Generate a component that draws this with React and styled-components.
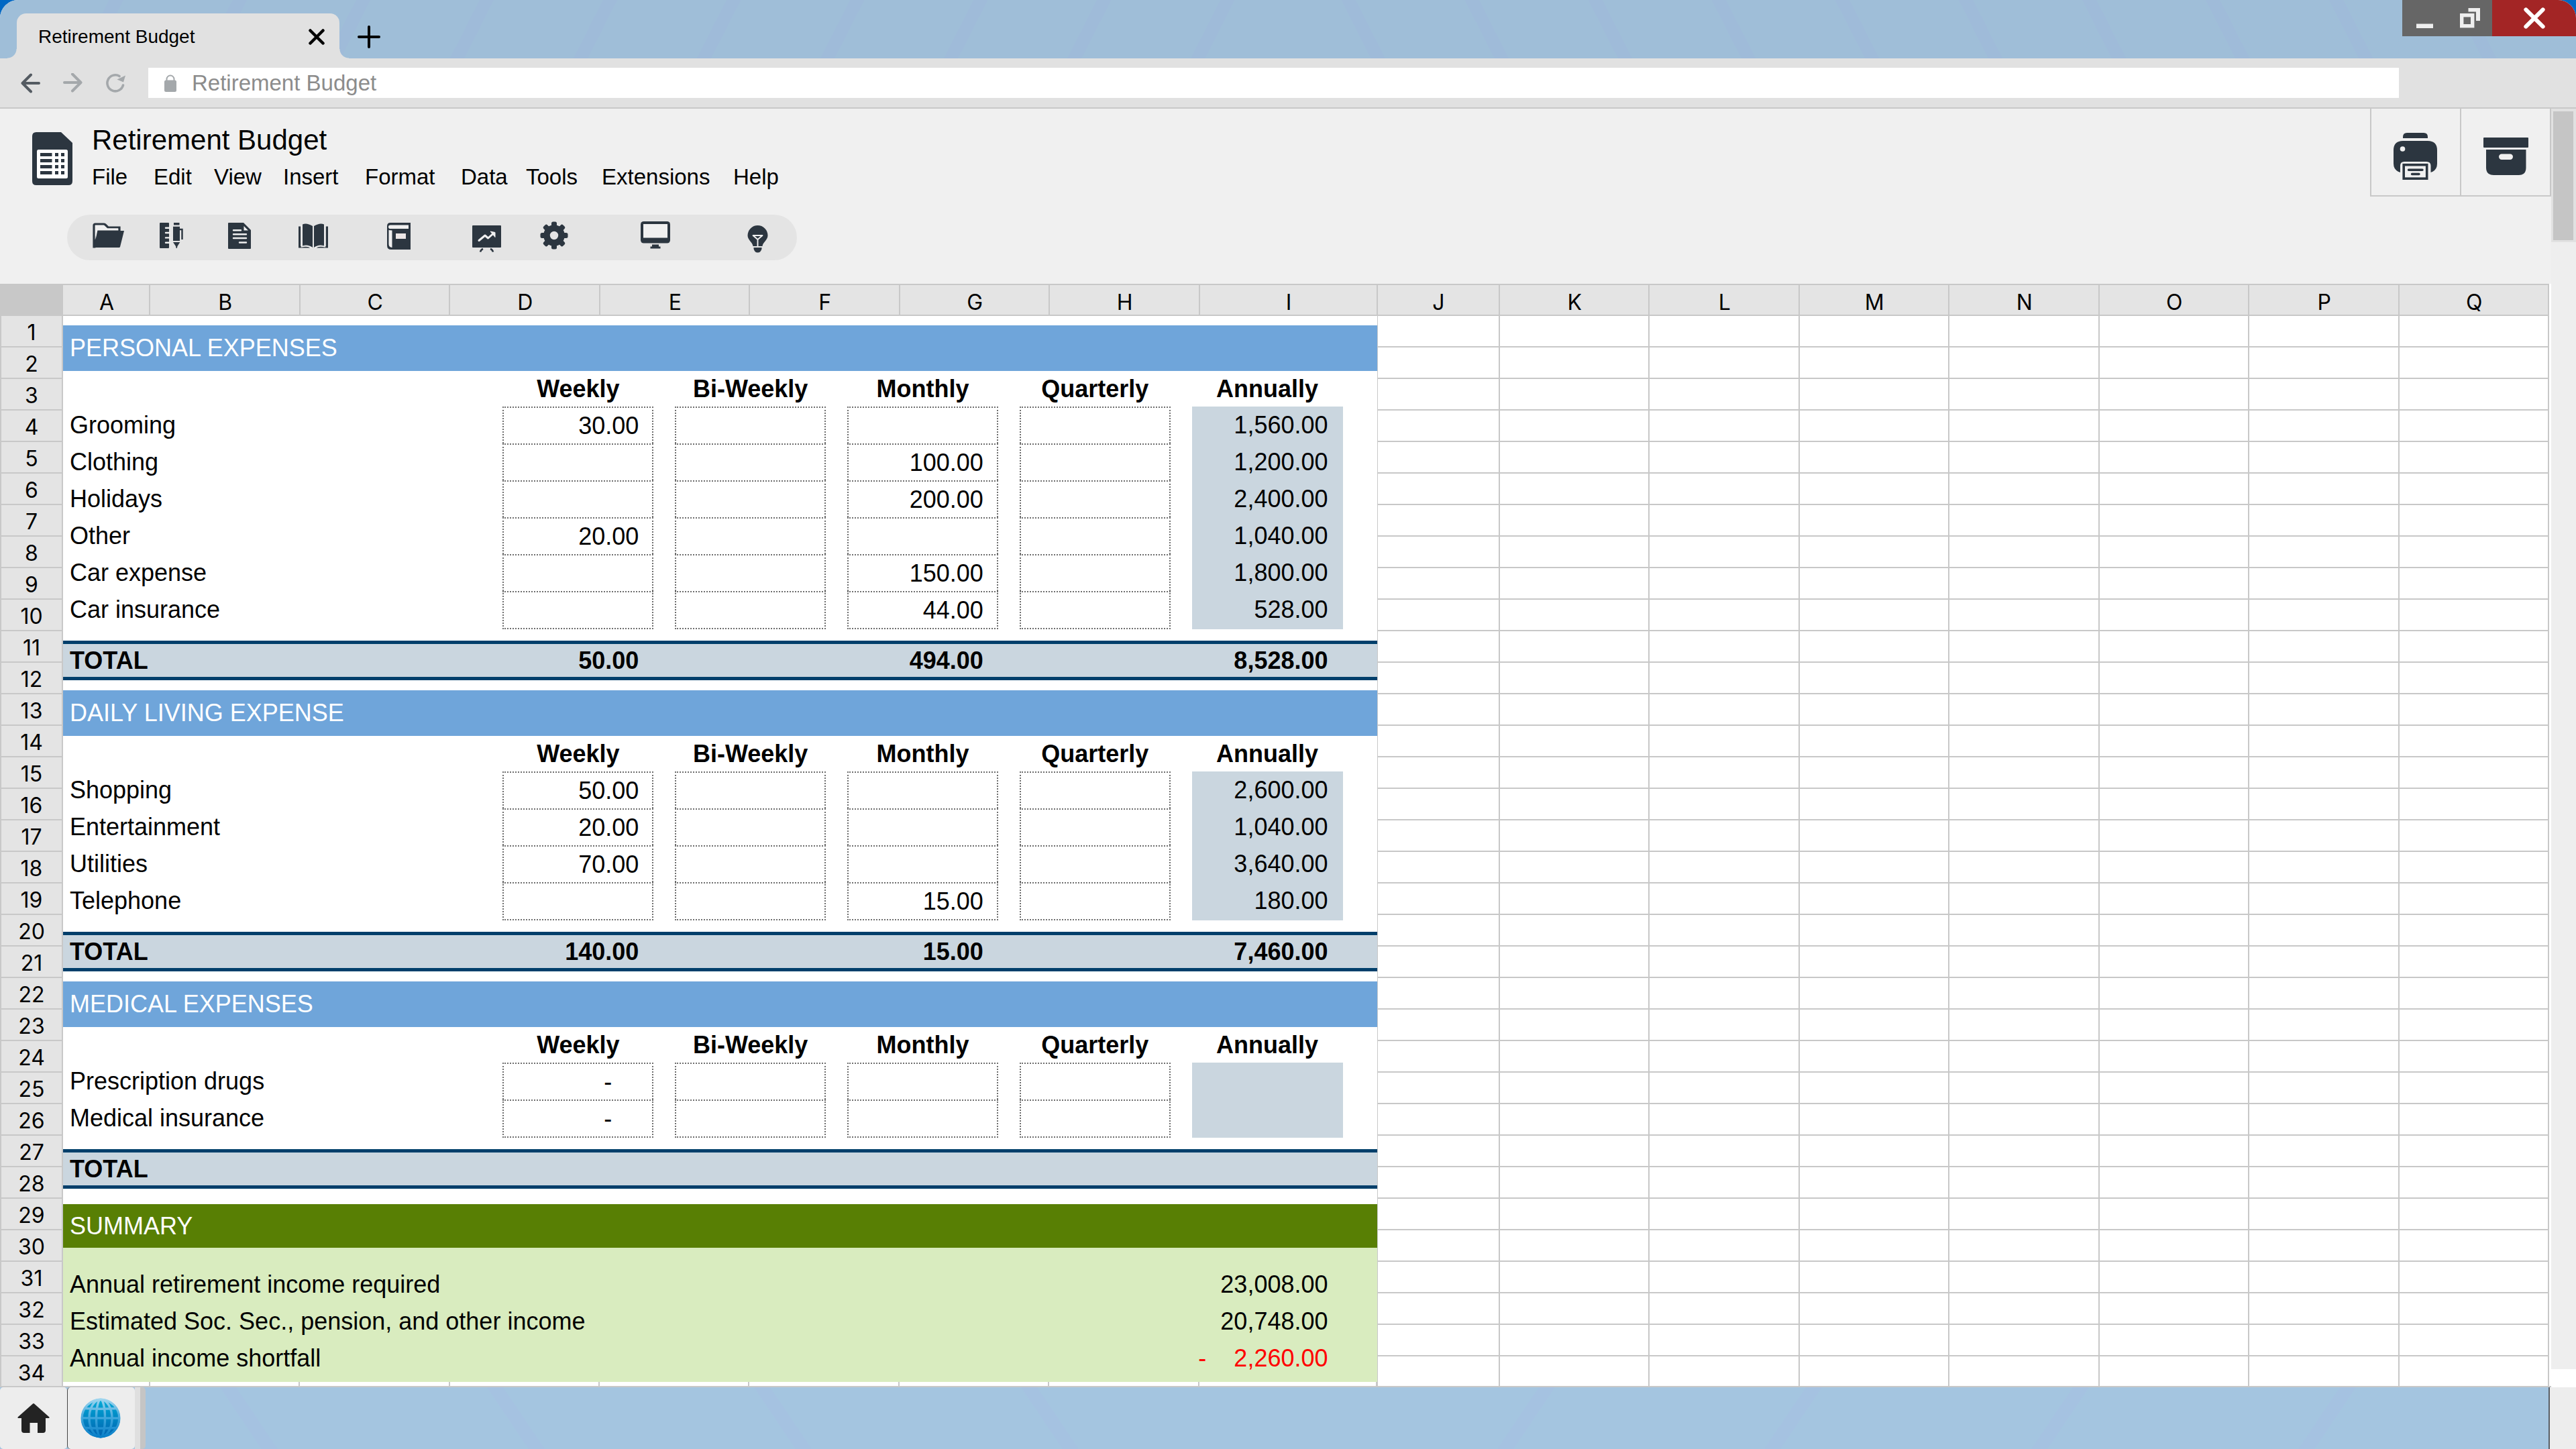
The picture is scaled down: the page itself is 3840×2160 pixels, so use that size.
import React from 'react';
import styled, { createGlobalStyle, css } from 'styled-components';

const INK = '#2c3640';
const PAPER = '#f0f0f0';
const LINE = '#c8c8c8';
const HEAD_FONT = `'Inter', 'Liberation Sans', sans-serif`;
const BASE_FONT = `'Liberation Sans', Arial, sans-serif`;
const SHEET_COLUMNS = '94px 260fr repeat(7, 447fr) 530fr 364fr repeat(7, 447fr)';

const GlobalStyle = createGlobalStyle`
  * {
    box-sizing: border-box;
  }

  body {
    margin: 0;
    background: #0068c4;
    font-family: ${BASE_FONT};
    color: #000;
  }

  button {
    margin: 0;
    padding: 0;
    border: 0;
    background: none;
    font: inherit;
    color: inherit;
    cursor: pointer;
  }

  svg {
    display: block;
  }
`;

const Window = styled.div`
  display: flex;
  flex-direction: column;
  height: 100vh;
  overflow: hidden;
  border-radius: 27px 27px 0 0;
  background: ${PAPER};
`;

/* ---------- browser chrome ---------- */

const TitleBar = styled.header`
  display: flex;
  align-items: flex-end;
  height: 87px;
  flex: none;
  padding-left: 25px;
  background:
    repeating-linear-gradient(117deg, transparent 0 145px, #9fbbd9 145px 164px) left / 50% 100% no-repeat,
    repeating-linear-gradient(243deg, transparent 0 145px, #9fbbd9 145px 164px) right / 50% 100% no-repeat,
    #9fbed8;
`;

const Tab = styled.div`
  position: relative;
  display: flex;
  align-items: center;
  justify-content: space-between;
  width: 481px;
  height: 67px;
  padding: 2px 22px 0 32px;
  border-radius: 14px 14px 0 0;
  background: #e1e1e1;
  font-size: 28px;

  &::before,
  &::after {
    content: '';
    position: absolute;
    bottom: 0;
    width: 14px;
    height: 14px;
  }

  &::before {
    right: 100%;
    background: radial-gradient(circle at 0 0, transparent 13px, #e1e1e1 14px);
  }

  &::after {
    left: 100%;
    background: radial-gradient(circle at 100% 0, transparent 13px, #e1e1e1 14px);
  }
`;

const NewTab = styled.button`
  margin: 0 auto 15px 27px;
`;

const Controls = styled.div`
  display: flex;
  align-self: flex-start;
`;

const ControlButton = styled.button`
  display: grid;
  place-items: center;
  width: ${({ $close }) => ($close ? '125px' : '67px')};
  height: 54px;
  background: ${({ $close }) => ($close ? '#a32525' : '#666')};
`;

const NavBar = styled.div`
  display: flex;
  align-items: center;
  gap: 34px;
  flex: none;
  height: 75px;
  padding: 0 264px 0 31px;
  border-bottom: 2px solid ${LINE};
  background: #e1e1e1;
`;

const AddressBar = styled.label`
  display: flex;
  align-items: center;
  gap: 23px;
  flex: 1;
  height: 45px;
  padding-left: 24px;
  background: #fff;
`;

const AddressInput = styled.input`
  flex: 1;
  padding: 0;
  border: 0;
  outline: none;
  background: none;
  font-family: ${BASE_FONT};
  font-size: 33px;
  color: #8c8c8c;
`;

/* ---------- application ---------- */

const Main = styled.main`
  display: flex;
  flex: 1;
  min-height: 0;
`;

const AppArea = styled.div`
  display: flex;
  flex-direction: column;
  flex: 1;
  min-width: 0;
`;

const AppHeader = styled.div`
  display: flex;
  justify-content: space-between;
  align-items: flex-start;
  flex: none;
`;

const HeaderLeft = styled.div`
  padding: 26px 0 35px 48px;
`;

const Brand = styled.div`
  display: flex;
  align-items: center;
  gap: 29px;
`;

const Title = styled.h1`
  margin: 0 0 14px;
  font-size: 42px;
  font-weight: 400;
  line-height: 42px;
`;

const Menu = styled.nav`
  display: grid;
  grid-template-columns: 92px 90px 103px 122px 143px 97px 113px 196px auto;
  justify-items: start;
`;

const MenuItem = styled.button`
  font-size: 33px;
  line-height: 40px;
`;

const Toolbar = styled.div`
  display: grid;
  grid-template-columns: 100px 102px 105px 132px 127px 101px 150px 159px auto;
  align-items: center;
  justify-items: start;
  width: 1088px;
  height: 68px;
  margin: 36px 0 0 52px;
  padding-left: 38px;
  border-radius: 34px;
  background: #e4e4e4;
`;

const HeaderActions = styled.div`
  display: flex;
  border-left: 2px solid ${LINE};
`;

const ActionButton = styled.button`
  display: grid;
  place-items: center;
  width: 134px;
  height: 131px;
  padding-top: 12px;
  border-right: 2px solid ${LINE};
  border-bottom: 2px solid ${LINE};
`;

const ScrollColumn = styled.div`
  display: flex;
  flex-direction: column;
  width: 37px;
  padding-bottom: 27px;
  background: #fff;
`;

const ThumbHolder = styled.div`
  height: 199px;
  padding: 4px 4px 3px 3px;
  background: #e1e1e1;
`;

const Thumb = styled.div`
  height: 100%;
  background: #c5c5c5;
`;

const Track = styled.div`
  flex: 1;
  background: #eee;
`;

/* ---------- sheet ---------- */

const Sheet = styled.section`
  flex: 1;
  min-height: 0;
  overflow: hidden;
  padding-right: 3px;
  border-bottom: 2px solid ${LINE};
  background: #fff;
`;

const ColumnHeads = styled.div`
  display: grid;
  grid-template-columns: ${SHEET_COLUMNS};
  height: 48px;
  border-top: 2px solid ${LINE};
  border-bottom: 2px solid ${LINE};
  background: #e4e4e4;
`;

const Head = styled.div`
  display: grid;
  place-items: center;
  padding: 8px 0 0 2px;
  border-right: 2px solid ${LINE};
  background: ${({ $corner }) => ($corner ? LINE : '#e4e4e4')};
  font-family: ${HEAD_FONT};
  font-size: 32px;
  line-height: 36px;
`;

const RowHead = styled(Head)`
  grid-column: 1;
  padding: 4px 0 0;
  border-left: 2px solid ${LINE};
  border-bottom: 2px solid ${LINE};
`;

const SheetBody = styled.div`
  display: grid;
  grid-template-columns: ${SHEET_COLUMNS};
  grid-template-rows: repeat(34, 47px);
`;

const Cell = styled.div`
  border-right: 2px solid ${LINE};
  border-bottom: 2px solid ${LINE};
`;

const Report = styled.div`
  grid-column: 2 / 11;
  grid-row: 1 / -1;
  display: flex;
  flex-direction: column;
  padding-top: 14px;
  border-right: 1px solid ${LINE};
  font-size: 36px;
  line-height: 40px;
`;

const Band = styled.h2`
  display: flex;
  align-items: center;
  height: ${({ $summary }) => ($summary ? '65px' : '68px')};
  margin: 0;
  padding-left: 10px;
  background: ${({ $summary }) => ($summary ? '#587f04' : '#6fa5da')};
  color: #fff;
  font-size: 36px;
  font-weight: 400;
`;

const Table = styled.table`
  display: block;
  margin-bottom: ${({ $last }) => ($last ? '23px' : '15px')};

  caption {
    display: block;
  }

  thead,
  tbody,
  tfoot {
    display: block;
  }
`;

const rowLayout = css`
  display: grid;
  grid-template-columns: 614fr repeat(5, 225fr);
  align-items: stretch;
  column-gap: 32px;
  padding: 0 51px 0 10px;
`;

const HeadingRow = styled.tr`
  ${rowLayout}
  height: 53px;
`;

const Heading = styled.th`
  padding: 0;
  font-weight: 700;
  line-height: 53px;
`;

const Row = styled.tr`
  ${rowLayout}
  height: 55px;

  &:last-child td {
    border-bottom-width: 2px;
  }
`;

const RowLabel = styled.th`
  padding: 0;
  text-align: left;
  font-weight: ${({ $bold }) => ($bold ? 700 : 400)};
  line-height: ${({ $bold }) => ($bold ? '49px' : '55px')};
  white-space: nowrap;
`;

const Amount = styled.td`
  padding: 0 ${({ $dash }) => ($dash ? '60px' : '20px')} 0 0;
  border: 2px dotted #6e6e6e;
  border-bottom-width: 0;
  text-align: right;
  line-height: 53px;
`;

const Annual = styled.td`
  padding: 0 22px 0 0;
  background: #cad6df;
  text-align: right;
  line-height: 55px;
`;

const TotalRow = styled.tr`
  ${rowLayout}
  height: 59px;
  margin-top: 19px;
  border-top: 5px solid #003f6b;
  border-bottom: 5px solid #003f6b;
  background: #cad6df;
`;

const Total = styled.td`
  padding: 0 22px 0 0;
  text-align: right;
  font-weight: 700;
  line-height: 49px;
`;

const SummaryList = styled.dl`
  margin: 0;
  padding: 27px 73px 8px 10px;
  background: #d9ecbf;
`;

const SummaryRow = styled.div`
  display: flex;
  justify-content: space-between;
  line-height: 55px;
`;

const SummaryValue = styled.dd`
  display: flex;
  gap: 41px;
  margin: 0;
  color: ${({ $negative }) => ($negative ? '#f00' : '#000')};
`;

const StubRow = styled.div`
  display: grid;
  grid-template-columns: 260fr repeat(7, 447fr) 530fr;
  flex: 1;
`;

const Stub = styled.div`
  border-right: 2px solid ${LINE};
`;

/* ---------- taskbar ---------- */

const TaskBar = styled.footer`
  display: flex;
  flex: none;
  height: 92px;
  background:
    repeating-linear-gradient(236deg, transparent 0 310px, #a5c2e1 310px 330px) left / 50% 100% no-repeat,
    repeating-linear-gradient(124deg, transparent 0 310px, #a5c2e1 310px 330px) right / 50% 100% no-repeat,
    #a4c5e0;
`;

const TaskButton = styled.button`
  display: grid;
  place-items: center;
  width: 100px;
  border-radius: 5px;
  background: #ededed;

  & + & {
    width: 101px;
    border-left: 1px solid #444;
    padding-right: 2px;
  }
`;

const TaskEdge = styled.div`
  width: 16px;
  border-left: 8px solid #dfdfdf;
  border-radius: 0 5px 5px 0;
  background: #c5c5c5;
`;

const TaskEnd = styled.div`
  width: 41px;
  margin-left: auto;
  border-left: 2px solid #5a5f66;
  background: #ededed;
`;

/* ---------- icons ---------- */

const FolderIcon = () => (
  <svg width="48" height="48" viewBox="0 0 48 48">
    <path d="M2 38V6Q2 4 4 4H16.500Q18 4 19 5L23 9H40V15H8L3 38Z" fill={PAPER} stroke={INK} strokeWidth="3.200" />
    <path d="M8 14H47L41 38Q40.700 39 39.500 39H2.500Q1.500 39 1.800 37Z" fill={INK} />
    <path d="M4.500 27V12Q4.500 10.500 6 10.500H38V13H7.500Z" fill={PAPER} />
  </svg>
);

const RulerPenIcon = () => (
  <svg width="36" height="48" viewBox="0 0 36 48">
    <rect y="2" width="14" height="38" rx="1" fill={INK} />
    <path d="M9 9.700H15M9 17H15M9 24.400H15M9 31.800H15" stroke={PAPER} strokeWidth="2.400" strokeLinecap="round" />
    <path d="M21 2H29.500V5.500H21ZM20 7.700H30V29H20ZM20 31H30.300L26.500 37L25.800 40H24.700L24 37Z" fill={INK} />
    <path d="M29 12H33.500V27" fill="none" stroke={INK} strokeWidth="2.400" />
  </svg>
);

const DocIcon = () => (
  <svg width="34" height="48" viewBox="0 0 34 48">
    <path d="M1 2H23L34 13V40Q34 41 33 41H1Q0 41 0 40V3Q0 2 1 2Z" fill={INK} />
    <path d="M23.500 7V13.500H30Z" fill={PAPER} />
    <path d="M8 13.300H19M8 19.300H27M8 25H27M17 31.500H27" stroke={PAPER} strokeWidth="2.400" strokeLinecap="round" />
  </svg>
);

const OpenBookIcon = () => (
  <svg width="44" height="48" viewBox="0 0 44 48">
    <path d="M6 4.500Q12 1.500 21 7V39Q15 34 6 36ZM23 7Q32 1.500 38 4.500V36Q29 34 23 39Z" fill={INK} />
    <path d="M0 7.500H3.200V37Q13 35.500 17 39.500H0ZM44 7.500H40.800V37Q31 35.500 27 39.500H44Z" fill={INK} />
    <path d="M4.600 6V37.800Q14 35.500 20 39.500M39.400 6V37.800Q30 35.500 24 39.500" fill="none" stroke={PAPER} strokeWidth="1.600" />
  </svg>
);

const BookIcon = () => (
  <svg width="35" height="48" viewBox="0 0 35 48">
    <path d="M5 2H35V42H6Q0 42 0 36V7Q0 2 5 2Z" fill={INK} />
    <path d="M5 5.500H32V11H5Q2 11 2 8.200Q2 5.500 5 5.500ZM2.500 13L7.500 13.500V39Q2.500 38.500 2.500 34Z" fill={PAPER} />
    <rect x="13" y="18" width="15" height="8" fill="#ece6e6" />
  </svg>
);

const ChartIcon = () => (
  <svg width="44" height="48" viewBox="0 0 44 48">
    <rect y="6" width="43" height="33" rx="1" fill={INK} />
    <path d="M10 28.500L19 21L23.600 25L32 17.500" fill="none" stroke={PAPER} strokeWidth="3" strokeLinecap="round" strokeLinejoin="round" />
    <path d="M27 15L34 16.500V23.500Z" fill={PAPER} stroke={PAPER} strokeLinejoin="round" />
    <path d="M16 41Q13 42 12 45.500M27 41Q30 42 31 45.500" fill="none" stroke={INK} strokeWidth="2.600" />
  </svg>
);

const GearIcon = () => (
  <svg width="42" height="48" viewBox="0 0 42 48">
    <circle cx="21" cy="21" r="11" fill="none" stroke={INK} strokeWidth="9.600" />
    {[0, 45, 90, 135, 180, 225, 270, 315].map((angle) => (
      <rect key={angle} x="17" y="0.500" width="8" height="9" rx="2.500" fill={INK} transform={`rotate(${angle} 21 21)`} />
    ))}
  </svg>
);

const MonitorIcon = () => (
  <svg width="44" height="48" viewBox="0 0 44 48">
    <rect width="44" height="32.500" rx="4.500" fill={INK} />
    <rect x="4" y="4" width="36" height="20.500" fill={PAPER} />
    <path d="M17 34.500H27V37.500H29.500V40.500H14.500V37.500H17Z" fill={INK} />
  </svg>
);

const BulbIcon = () => (
  <svg width="31" height="48" viewBox="0 0 31 48">
    <path d="M15.500 6A15 15 0 0 1 30.500 21C30.500 28 23 31 22.500 37H8.500C8 31 0.500 28 0.500 21A15 15 0 0 1 15.500 6Z" fill={INK} />
    <path d="M9.500 39H21.500V41Q20 46.500 15.500 46.500Q11 46.500 9.500 41Z" fill={INK} />
    <path d="M8.500 21H22.500L15.500 27ZM15.500 27V37" fill="none" stroke={PAPER} strokeWidth="1.900" strokeLinejoin="round" />
  </svg>
);

const SheetLogo = () => (
  <svg width="60" height="79" viewBox="0 0 60 79">
    <path d="M6 0H43L60 16V73Q60 79 54 79H6Q0 79 0 73V6Q0 0 6 0Z" fill={INK} />
    <rect x="7" y="26" width="46" height="43" rx="2.500" fill="#fff" />
    {[31, 40, 49, 58].map((y) => (
      <path key={y} d={`M12 ${y}H29.500V${y + 5}H12ZM34 ${y}H39V${y + 5}H34ZM43 ${y}H48V${y + 5}H43Z`} fill={INK} />
    ))}
  </svg>
);

const PrinterIcon = () => (
  <svg width="66" height="70" viewBox="0 0 66 70">
    <path d="M14 8V6Q14 0 20 0H45Q51 0 51 6V8Z" fill={INK} />
    <path d="M14 12H51Q65 12 65 26V46Q65 56 55.500 59V49Q55.500 43 49 43H16Q10 43 10 49V59Q0 56 0 46V26Q0 12 14 12Z" fill={INK} />
    <circle cx="13.500" cy="24" r="3.800" fill={PAPER} />
    <rect x="15.200" y="47.700" width="34.500" height="20.500" fill={PAPER} stroke={INK} strokeWidth="3.600" />
    <path d="M22.500 55.300H43M27.500 61.500H38" stroke={INK} strokeWidth="3.400" strokeLinecap="round" />
  </svg>
);

const ArchiveIcon = () => (
  <svg width="67" height="58" viewBox="0 0 67 58">
    <rect y="1" width="67" height="15" rx="1" fill={INK} />
    <path d="M4 19H63.500V46Q63.500 57 53 57H15Q4 57 4 46Z" fill={INK} />
    <rect x="23" y="25.500" width="21" height="8.500" rx="4.200" fill={PAPER} />
  </svg>
);

const CrossIcon = ({ size, color, width }) => (
  <svg width={size} height={size} viewBox="0 0 24 24">
    <path d="M2.500 2.500L21.500 21.500M21.500 2.500L2.500 21.500" stroke={color} strokeWidth={width} strokeLinecap="round" />
  </svg>
);

const PlusIcon = () => (
  <svg width="34" height="34" viewBox="0 0 34 34">
    <path d="M17 2V32M2 17H32" stroke="#000" strokeWidth="4" strokeLinecap="round" />
  </svg>
);

const RestoreIcon = () => (
  <svg width="30" height="30" viewBox="0 0 30 30">
    <path d="M12.500 0H30V19H24V5.500H12.500Z" fill="#eee" />
    <rect x="2.700" y="10.700" width="16" height="16" fill="none" stroke="#eee" strokeWidth="5.400" />
  </svg>
);

const MinimizeIcon = () => (
  <svg width="25" height="30" viewBox="0 0 25 30">
    <rect y="23.500" width="25" height="6.500" fill="#eee" />
  </svg>
);

const BackIcon = () => (
  <svg width="29" height="30" viewBox="0 0 29 30">
    <path d="M27 15H3M15 2.500L2.500 15L15 27.500" fill="none" stroke="#545b62" strokeWidth="4" strokeLinecap="round" strokeLinejoin="round" />
  </svg>
);

const ForwardIcon = () => (
  <svg width="29" height="30" viewBox="0 0 29 30">
    <path d="M2 14H26M14 1.500L26.500 14L14 26.500" fill="none" stroke="#a4a8ab" strokeWidth="4" strokeLinecap="round" strokeLinejoin="round" />
  </svg>
);

const ReloadIcon = () => (
  <svg width="30" height="30" viewBox="0 0 30 30">
    <path d="M21 4.500A12 12 0 1 0 26.500 18" fill="none" stroke="#a4a8ab" strokeWidth="3.600" strokeLinecap="round" />
    <path d="M17.500 9.500L30 3.500L27 13.500Z" fill="#a4a8ab" />
  </svg>
);

const LockIcon = () => (
  <svg width="18" height="26" viewBox="0 0 18 26">
    <path d="M3.500 10V7A5.500 5.500 0 0 1 14.500 7V10" fill="none" stroke="#a4a8ab" strokeWidth="2" />
    <rect y="8.500" width="18" height="17.500" rx="2.500" fill="#a4a8ab" />
  </svg>
);

const HomeIcon = () => (
  <svg width="48" height="46" viewBox="0 0 48 46">
    <path d="M23 1.500Q24 0.500 25 1.500L47.500 21.500Q48 23 46.500 23H42V41Q42 45 38 45H30V30H18.500V45H10Q6 45 6 41V23H1.500Q0 23 0.500 21.500Z" fill="#232323" />
  </svg>
);

const GlobeIcon = () => (
  <svg width="60" height="60" viewBox="0 0 60 60">
    <defs>
      <linearGradient id="globe-sea" x1="0" y1="0" x2="0" y2="1">
        <stop offset="0" stopColor="#00add9" />
        <stop offset="1" stopColor="#0060ae" />
      </linearGradient>
      <linearGradient id="globe-line" gradientUnits="userSpaceOnUse" x1="0" y1="0" x2="0" y2="60">
        <stop offset="0" stopColor="#a5d8ef" />
        <stop offset="0.500" stopColor="#3fa6dc" />
        <stop offset="1" stopColor="#047cc6" />
      </linearGradient>
    </defs>
    <circle cx="30" cy="30" r="29" fill="url(#globe-sea)" />
    <g fill="none" stroke="url(#globe-line)" strokeWidth="3.400">
      <circle cx="30" cy="30" r="27.800" />
      <ellipse cx="30" cy="30" rx="6.500" ry="27.800" />
      <ellipse cx="30" cy="30" rx="17" ry="27.800" />
      <path d="M6 15.500Q30 17 54 15.500M2 29.900L58 30.100M6 44.500Q30 46 54 44.500" />
    </g>
  </svg>
);

/* ---------- data ---------- */

const menuItems = ['File', 'Edit', 'View', 'Insert', 'Format', 'Data', 'Tools', 'Extensions', 'Help'];

const tools = [
  ['Open', FolderIcon],
  ['Draw', RulerPenIcon],
  ['Document', DocIcon],
  ['Read', OpenBookIcon],
  ['Notebook', BookIcon],
  ['Chart', ChartIcon],
  ['Settings', GearIcon],
  ['Display', MonitorIcon],
  ['Ideas', BulbIcon],
];

const columns = 'ABCDEFGHIJKLMNOPQ'.split('');
const freeColumns = columns.slice(9);
const rows = Array.from({ length: 34 }, (_, i) => i + 1);
const periods = ['Weekly', 'Bi-Weekly', 'Monthly', 'Quarterly', 'Annually'];

// amounts: weekly, bi-weekly, monthly, quarterly, annually
const sections = [
  {
    title: 'PERSONAL EXPENSES',
    items: [
      ['Grooming', '30.00', '', '', '', '1,560.00'],
      ['Clothing', '', '', '100.00', '', '1,200.00'],
      ['Holidays', '', '', '200.00', '', '2,400.00'],
      ['Other', '20.00', '', '', '', '1,040.00'],
      ['Car expense', '', '', '150.00', '', '1,800.00'],
      ['Car insurance', '', '', '44.00', '', '528.00'],
    ],
    total: ['50.00', '', '494.00', '', '8,528.00'],
  },
  {
    title: 'DAILY LIVING EXPENSE',
    items: [
      ['Shopping', '50.00', '', '', '', '2,600.00'],
      ['Entertainment', '20.00', '', '', '', '1,040.00'],
      ['Utilities', '70.00', '', '', '', '3,640.00'],
      ['Telephone', '', '', '15.00', '', '180.00'],
    ],
    total: ['140.00', '', '15.00', '', '7,460.00'],
  },
  {
    title: 'MEDICAL EXPENSES',
    items: [
      ['Prescription drugs', '-', '', '', '', ''],
      ['Medical insurance', '-', '', '', '', ''],
    ],
    total: ['', '', '', '', ''],
  },
];

const summary = [
  { label: 'Annual retirement income required', value: '23,008.00' },
  { label: 'Estimated Soc. Sec., pension, and other income', value: '20,748.00' },
  { label: 'Annual income shortfall', value: '2,260.00', negative: true },
];

const ExpenseTable = ({ section, last }) => (
  <Table $last={last}>
    <caption>
      <Band>{section.title}</Band>
    </caption>
    <thead>
      <HeadingRow>
        <td />
        {periods.map((period) => (
          <Heading key={period} scope="col">{period}</Heading>
        ))}
      </HeadingRow>
    </thead>
    <tbody>
      {section.items.map(([label, ...amounts]) => (
        <Row key={label}>
          <RowLabel scope="row">{label}</RowLabel>
          {amounts.slice(0, 4).map((amount, i) => (
            <Amount key={periods[i]} $dash={amount === '-'}>{amount}</Amount>
          ))}
          <Annual>{amounts[4]}</Annual>
        </Row>
      ))}
    </tbody>
    <tfoot>
      <TotalRow>
        <RowLabel scope="row" $bold>TOTAL</RowLabel>
        {section.total.map((amount, i) => (
          <Total key={periods[i]}>{amount}</Total>
        ))}
      </TotalRow>
    </tfoot>
  </Table>
);

const App = () => {
  const [address, setAddress] = React.useState('Retirement Budget');

  return (
    <>
      <GlobalStyle />
      <Window>
        <TitleBar>
          <Tab>
            Retirement Budget
            <button aria-label="Close tab"><CrossIcon size={24} color="#000" width={4.5} /></button>
          </Tab>
          <NewTab aria-label="New tab"><PlusIcon /></NewTab>
          <Controls>
            <ControlButton aria-label="Minimize"><MinimizeIcon /></ControlButton>
            <ControlButton aria-label="Restore"><RestoreIcon /></ControlButton>
            <ControlButton aria-label="Close" $close><CrossIcon size={32} color="#fff" width={4.5} /></ControlButton>
          </Controls>
        </TitleBar>

        <NavBar>
          <button aria-label="Back"><BackIcon /></button>
          <button aria-label="Forward"><ForwardIcon /></button>
          <button aria-label="Reload"><ReloadIcon /></button>
          <AddressBar>
            <LockIcon />
            <AddressInput
              aria-label="Address"
              value={address}
              onChange={(e) => setAddress(e.target.value)}
            />
          </AddressBar>
        </NavBar>

        <Main>
          <AppArea>
            <AppHeader>
              <HeaderLeft>
                <Brand>
                  <SheetLogo />
                  <div>
                    <Title>Retirement Budget</Title>
                    <Menu>
                      {menuItems.map((item) => (
                        <MenuItem key={item}>{item}</MenuItem>
                      ))}
                    </Menu>
                  </div>
                </Brand>
                <Toolbar>
                  {tools.map(([name, Icon]) => (
                    <button key={name} aria-label={name}><Icon /></button>
                  ))}
                </Toolbar>
              </HeaderLeft>
              <HeaderActions>
                <ActionButton aria-label="Print"><PrinterIcon /></ActionButton>
                <ActionButton aria-label="Archive"><ArchiveIcon /></ActionButton>
              </HeaderActions>
            </AppHeader>

            <Sheet>
              <ColumnHeads>
                <Head $corner />
                {columns.map((name) => (
                  <Head key={name}>{name}</Head>
                ))}
              </ColumnHeads>
              <SheetBody>
                <Report>
                  {sections.map((section, i) => (
                    <ExpenseTable key={section.title} section={section} last={i === sections.length - 1} />
                  ))}
                  <Band $summary>SUMMARY</Band>
                  <SummaryList>
                    {summary.map(({ label, value, negative }) => (
                      <SummaryRow key={label}>
                        <dt>{label}</dt>
                        <SummaryValue $negative={negative}>
                          {negative && <span>-</span>}
                          <span>{value}</span>
                        </SummaryValue>
                      </SummaryRow>
                    ))}
                  </SummaryList>
                  <StubRow>
                    {columns.slice(0, 9).map((name) => (
                      <Stub key={name} />
                    ))}
                  </StubRow>
                </Report>
                {rows.map((row) => (
                  <React.Fragment key={row}>
                    <RowHead>{row}</RowHead>
                    {freeColumns.map((name) => (
                      <Cell key={name} />
                    ))}
                  </React.Fragment>
                ))}
              </SheetBody>
            </Sheet>
          </AppArea>

          <ScrollColumn>
            <ThumbHolder><Thumb /></ThumbHolder>
            <Track />
          </ScrollColumn>
        </Main>

        <TaskBar>
          <TaskButton aria-label="Home"><HomeIcon /></TaskButton>
          <TaskButton aria-label="Browser"><GlobeIcon /></TaskButton>
          <TaskEdge />
          <TaskEnd />
        </TaskBar>
      </Window>
    </>
  );
};

export default App;
